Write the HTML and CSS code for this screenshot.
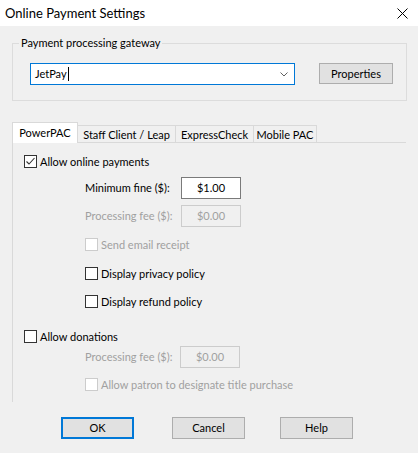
FILE: index.html
```html
<!DOCTYPE html>
<html>
<head>
<meta charset="utf-8">
<link rel="stylesheet" href="styles.css">
</head>
<body>
<div class="window">
  <div class="titlebar">
    <span class="title">Online Payment Settings</span>
    <svg class="close" width="11" height="11" viewBox="0 0 11 11"><path d="M0.5 0.5 L10.5 10.5 M10.5 0.5 L0.5 10.5" stroke="#000" stroke-width="1" fill="none"/></svg>
  </div>

  <div class="group">
    <span class="group-label">Payment processing gateway</span>
    <div class="combo">
      <span class="combo-text">JetPay</span><span class="caret"></span>
      <svg class="chevron" width="8" height="5" viewBox="0 0 8 5"><path d="M0.5 0.5 L4 4 L7.5 0.5" stroke="#606060" stroke-width="1" fill="none"/></svg>
    </div>
    <div class="btn btn-props">Properties</div>
  </div>

  <div class="tabs">
    <div class="tab tab-1 selected">PowerPAC</div>
    <div class="tab tab-2">Staff Client / Leap</div>
    <div class="tab tab-3">ExpressCheck</div>
    <div class="tab tab-4">Mobile PAC</div>
  </div>

  <div class="panel">
    <div class="cbrow row-a">
      <span class="cb checked"><svg width="11" height="11" viewBox="0 0 11 11"><path d="M1.5 5.5 L4 8 L9.5 2" stroke="#333" stroke-width="1.1" fill="none"/></svg></span>
      <span class="cblabel">Allow online payments</span>
    </div>
    <div class="field row-b">
      <span class="flabel">Minimum fine ($):</span>
      <span class="input">$1.00</span>
    </div>
    <div class="field row-c disabled">
      <span class="flabel">Processing fee ($):</span>
      <span class="input">$0.00</span>
    </div>
    <div class="cbrow indent row-d disabled">
      <span class="cb"></span>
      <span class="cblabel">Send email receipt</span>
    </div>
    <div class="cbrow indent row-e">
      <span class="cb"></span>
      <span class="cblabel">Display privacy policy</span>
    </div>
    <div class="cbrow indent row-f">
      <span class="cb"></span>
      <span class="cblabel">Display refund policy</span>
    </div>
    <div class="cbrow row-g">
      <span class="cb"></span>
      <span class="cblabel">Allow donations</span>
    </div>
    <div class="field row-h disabled">
      <span class="flabel">Processing fee ($):</span>
      <span class="input">$0.00</span>
    </div>
    <div class="cbrow indent row-i disabled">
      <span class="cb"></span>
      <span class="cblabel">Allow patron to designate title purchase</span>
    </div>
  </div>

  <div class="buttons">
    <div class="btn btn-ok">OK</div>
    <div class="btn btn-cancel">Cancel</div>
    <div class="btn btn-help">Help</div>
  </div>
</div>
</body>
</html>
```

FILE: styles.css
```css
html, body {
  margin: 0;
  padding: 0;
}
body {
  background: #f0f0f0;
  font-family: "Lato", "Open Sans", sans-serif;
  font-size: 11px;
  color: #000;
}
.window {
  width: 418px;
  height: 453px;
  overflow: hidden;
  background: #f0f0f0;
}
.titlebar {
  height: 26px;
  background: #fff;
  display: flex;
  align-items: center;
  padding-left: 5px;
}
.title {
  font-size: 13px;
  line-height: 16px;
}
.close {
  margin-left: auto;
  margin-right: 10px;
}

.group {
  position: relative;
  box-sizing: border-box;
  margin: 17px 0 0 12px;
  width: 395px;
  height: 58px;
  border: 1px solid #dcdcdc;
  padding: 19px 0 0 17px;
  display: flex;
  align-items: flex-start;
}
.group-label {
  position: absolute;
  top: -9px;
  left: 6px;
  padding: 0 2px;
  line-height: 16px;
  background: #f0f0f0;
}
.combo {
  box-sizing: border-box;
  width: 265px;
  height: 22px;
  border: 1px solid #0078d7;
  background: #fff;
  display: flex;
  align-items: center;
  padding: 0 6px 0 4px;
}
.combo-text {
  line-height: 16px;
}
.caret {
  width: 1px;
  height: 14px;
  background: #000;
  margin-left: 1px;
}
.chevron {
  margin-left: auto;
}
.btn {
  box-sizing: border-box;
  width: 73px;
  height: 22px;
  background: #e1e1e1;
  border: 1px solid #adadad;
  display: flex;
  align-items: center;
  justify-content: center;
  line-height: 16px;
}
.btn-props {
  width: 74px;
  height: 21px;
  margin-left: 24px;
}

.tabs {
  position: relative;
  z-index: 1;
  display: flex;
  align-items: flex-end;
  height: 20px;
  margin: 21px 0 0 12px;
}
.tab {
  box-sizing: border-box;
  height: 17px;
  border: 1px solid #d9d9d9;
  border-bottom: none;
  background: #f0f0f0;
  display: flex;
  align-items: center;
  justify-content: center;
  line-height: 15px;
  margin-left: -1px;
}
.tab.selected {
  height: 21px;
  margin-bottom: -1px;
  background: #fff;
  padding-bottom: 2px;
}
.tab-1 { width: 66px; margin-left: 0; }
.tab-2 { width: 99px; }
.tab-3 { width: 79px; }
.tab-4 { width: 64px; }

.panel {
  box-sizing: border-box;
  margin-left: 12px;
  width: 394px;
  height: 260px;
  border-top: 1px solid #d9d9d9;
  border-left: 1px solid #d9d9d9;
  padding-left: 11px;
  display: flex;
  flex-direction: column;
}
.cbrow {
  display: flex;
  align-items: center;
  height: 13px;
}
.cbrow.indent {
  margin-left: 61px;
}
.cb {
  box-sizing: border-box;
  width: 13px;
  height: 13px;
  border: 1px solid #333;
  background: #fff;
  display: flex;
  align-items: center;
  justify-content: center;
  flex: none;
}
.cblabel {
  margin-left: 3px;
  line-height: 16px;
  white-space: nowrap;
}
.disabled .cb {
  border-color: #cccccc;
}
.disabled .cblabel,
.disabled .flabel,
.disabled .input {
  color: #a0a0a0;
}
.field {
  display: flex;
  align-items: center;
  margin-left: 61px;
  height: 22px;
}
.flabel {
  width: 96px;
  line-height: 16px;
  white-space: nowrap;
}
.input {
  box-sizing: border-box;
  width: 60px;
  height: 22px;
  border: 1px solid #7a7a7a;
  background: #fff;
  display: flex;
  align-items: center;
  justify-content: center;
  line-height: 16px;
}
.disabled .input {
  border-color: #cccccc;
  background: #f0f0f0;
}

.row-a { margin-top: 12px; }
.row-b { margin-top: 9px; }
.row-c { margin-top: 6px; }
.row-d { margin-top: 11px; }
.row-e { margin-top: 16px; }
.row-f { margin-top: 15px; }
.row-g { margin-top: 22px; }
.row-h { margin-top: 3px; }
.row-h .flabel { width: 95px; }
.row-i { margin-top: 10px; }

.buttons {
  display: flex;
  margin: 15px 0 0 61px;
}
.btn-ok {
  border: 2px solid #0078d7;
}
.btn-cancel { margin-left: 38px; }
.btn-help { margin-left: 35px; }
```
